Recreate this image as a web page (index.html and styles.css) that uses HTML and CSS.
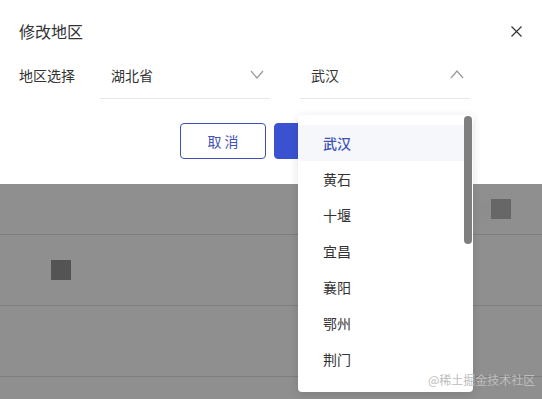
FILE: index.html
```html
<!DOCTYPE html>
<html lang="zh-CN">
<head>
    <meta charset="UTF-8">
    <meta name="viewport" content="width=device-width, initial-scale=1.0">
    <title>修改地区</title>
    <link rel="stylesheet" href="styles.css">
</head>
<body>
    <div class="dialog">
        <div class="dialog-header">
            <h1>修改地区</h1>
            <span class="close">
                <svg width="11" height="11" viewBox="0 0 11 11"><path d="M0.5 0.5 L10.5 10.5 M10.5 0.5 L0.5 10.5" stroke="#333" stroke-width="1.2" fill="none"/></svg>
            </span>
        </div>
        <div class="form-row">
            <label class="form-label">地区选择</label>
            <div class="select">
                <span class="select-value">湖北省</span>
                <svg class="arrow" width="14" height="9" viewBox="0 0 14 9"><polyline points="1,1 7,8 13,1" stroke="#999" stroke-width="1.2" fill="none"/></svg>
            </div>
            <div class="select">
                <span class="select-value">武汉</span>
                <svg class="arrow" width="14" height="9" viewBox="0 0 14 9"><polyline points="1,8 7,1 13,8" stroke="#999" stroke-width="1.2" fill="none"/></svg>
            </div>
        </div>
        <div class="dialog-footer">
            <button class="btn btn-cancel">取 消</button>
            <button class="btn btn-ok"></button>
        </div>
    </div>

    <div class="page">
        <div class="row row-first"><span class="square square-right"></span></div>
        <div class="row"><span class="square square-left"></span></div>
        <div class="row"></div>
        <div class="row row-last"></div>
    </div>

    <div class="dropdown">
        <ul class="options">
            <li class="active">武汉</li>
            <li>黄石</li>
            <li>十堰</li>
            <li>宜昌</li>
            <li>襄阳</li>
            <li>鄂州</li>
            <li>荆门</li>
        </ul>
        <div class="scroll-thumb"></div>
    </div>

    <div class="watermark">@稀土掘金技术社区</div>
</body>
</html>
```

FILE: styles.css
```css
body {
    font-family: "Noto Sans CJK SC", "Noto Sans", sans-serif;
    background-color: #8f8f8f;
    margin: 0;
    width: 542px;
    height: 399px;
    overflow: hidden;
    color: #333;
}
.dialog {
    background-color: #fff;
    height: 184px;
    box-sizing: border-box;
    padding-top: 19px;
}
.dialog-header {
    display: flex;
    justify-content: space-between;
    align-items: center;
    padding: 0 20px 0 19px;
    height: 24px;
}
.dialog-header h1 {
    margin: 0;
    font-size: 16px;
    font-weight: 400;
    line-height: 24px;
    color: #333;
}
.close {
    display: flex;
    width: 11px;
    height: 11px;
}
.form-row {
    display: flex;
    margin-top: 12px;
    padding-left: 19px;
}
.form-label {
    width: 81px;
    font-size: 14px;
    line-height: 40px;
    color: #333;
}
.select {
    width: 170px;
    height: 44px;
    box-sizing: border-box;
    padding: 0 6px 4px 11px;
    border-bottom: 1px solid #e6e6e6;
    display: flex;
    justify-content: space-between;
    align-items: center;
    margin-right: 30px;
}
.select-value {
    font-size: 14px;
    line-height: 40px;
    color: #333;
}
.arrow {
    margin-top: -1px;
}
.dialog-footer {
    display: flex;
    justify-content: center;
    gap: 8px;
    margin-top: 24px;
    padding-right: 2px;
}
.btn {
    width: 86px;
    height: 36px;
    border-radius: 4px;
    font-family: inherit;
    font-size: 14px;
    cursor: pointer;
}
.btn-cancel {
    background-color: #fff;
    border: 1px solid #3f51b5;
    color: #3f51b5;
}
.btn-ok {
    background-color: #3a52d0;
    border: 1px solid #3a52d0;
    color: #fff;
}
.page {
    display: flex;
    flex-direction: column;
    height: 215px;
    overflow: hidden;
}
.row {
    height: 70px;
    flex-shrink: 0;
    border-bottom: 1px solid #7e7e7e;
    display: flex;
    align-items: center;
}
.row-first {
    height: 50px;
    justify-content: flex-end;
}
.row-last {
    height: 22px;
    border-bottom: none;
}
.square {
    width: 20px;
    height: 20px;
}
.square-right {
    background-color: #676767;
    margin-right: 31px;
    box-shadow: -14px 0 10px -6px #8a8a8a;
}
.square-left {
    background-color: #545454;
    margin-left: 51px;
}
.dropdown {
    position: absolute;
    left: 298px;
    top: 115px;
    width: 175px;
    height: 277px;
    background-color: #fff;
    border-radius: 4px;
    box-shadow: 0 2px 10px rgba(0, 0, 0, 0.12);
    overflow: hidden;
}
.options {
    list-style: none;
    margin: 0;
    padding: 10px 0 0;
}
.options li {
    height: 36px;
    line-height: 36px;
    padding-left: 25px;
    font-size: 14px;
    color: #333;
}
.options li.active {
    background-color: #f5f7fa;
    color: #3f51b5;
    font-weight: 500;
}
.scroll-thumb {
    position: absolute;
    right: 1px;
    top: 1px;
    width: 8px;
    height: 128px;
    border-radius: 4px;
    background-color: #7f7f7f;
}
.watermark {
    position: absolute;
    left: 428px;
    top: 371px;
    font-size: 12px;
    line-height: 18px;
    color: #bdbdbd;
}
```
